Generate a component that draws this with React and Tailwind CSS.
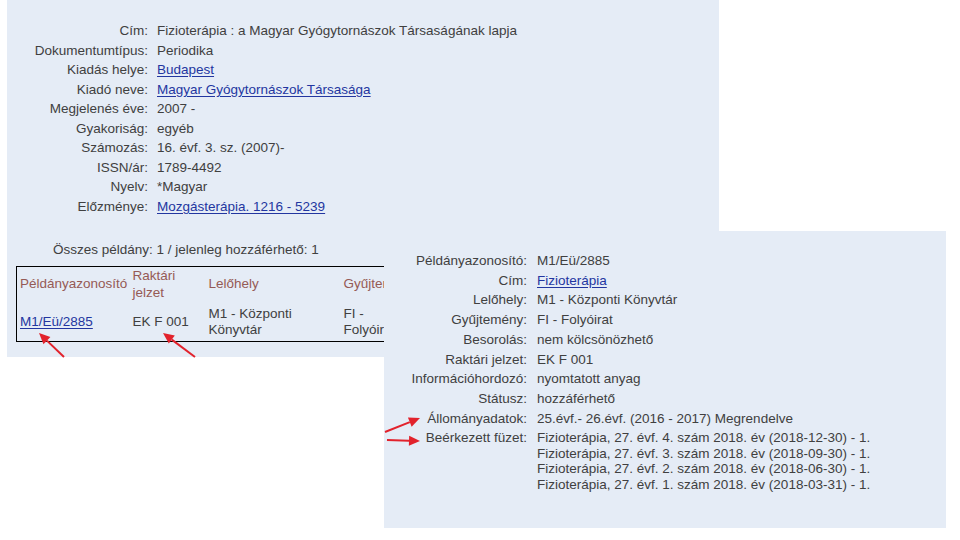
import React from 'react'

// ─── data ────────────────────────────────────────────────────────────────────

const recordRows = [
  { label: 'Cím:', value: 'Fizioterápia : a Magyar Gyógytornászok Társaságának lapja' },
  { label: 'Dokumentumtípus:', value: 'Periodika' },
  { label: 'Kiadás helye:', value: 'Budapest', link: true },
  { label: 'Kiadó neve:', value: 'Magyar Gyógytornászok Társasága', link: true },
  { label: 'Megjelenés éve:', value: '2007 -' },
  { label: 'Gyakoriság:', value: 'egyéb' },
  { label: 'Számozás:', value: '16. évf. 3. sz. (2007)-' },
  { label: 'ISSN/ár:', value: '1789-4492' },
  { label: 'Nyelv:', value: '*Magyar' },
  { label: 'Előzménye:', value: 'Mozgásterápia. 1216 - 5239', link: true },
]

const copyRows = [
  { label: 'Példányazonosító:', value: 'M1/Eü/2885' },
  { label: 'Cím:', value: 'Fizioterápia', link: true },
  { label: 'Lelőhely:', value: 'M1 - Központi Könyvtár' },
  { label: 'Gyűjtemény:', value: 'FI - Folyóirat' },
  { label: 'Besorolás:', value: 'nem kölcsönözhető' },
  { label: 'Raktári jelzet:', value: 'EK F 001' },
  { label: 'Információhordozó:', value: 'nyomtatott anyag' },
  { label: 'Státusz:', value: 'hozzáférhető' },
  { label: 'Állományadatok:', value: '25.évf.- 26.évf. (2016 - 2017) Megrendelve' },
]

const issues = [
  'Fizioterápia, 27. évf. 4. szám 2018. év (2018-12-30) - 1.',
  'Fizioterápia, 27. évf. 3. szám 2018. év (2018-09-30) - 1.',
  'Fizioterápia, 27. évf. 2. szám 2018. év (2018-06-30) - 1.',
  'Fizioterápia, 27. évf. 1. szám 2018. év (2018-03-31) - 1.',
]

const font = { fontFamily: '"Liberation Sans", Arial, sans-serif' }
const linkCls = 'text-[#2336a0] underline underline-offset-2'

function Value({ row }) {
  return row.link ? <span className={linkCls}>{row.value}</span> : row.value
}

// ─── Arrow ───────────────────────────────────────────────────────────────────

function Arrow({ x1, y1, x2, y2 }) {
  const a = Math.atan2(y2 - y1, x2 - x1)
  const len = 11
  const w = 5
  const bx = x2 - Math.cos(a) * len
  const by = y2 - Math.sin(a) * len
  const px = -Math.sin(a) * w
  const py = Math.cos(a) * w
  return (
    <g>
      <line x1={x1} y1={y1} x2={bx} y2={by} stroke="#e2222c" strokeWidth="2" />
      <polygon points={`${x2},${y2} ${bx + px},${by + py} ${bx - px},${by - py}`} fill="#e2222c" />
    </g>
  )
}

export default function App() {
  return (
    <div className="relative w-[960px] h-[540px] bg-white overflow-hidden text-[13.5px] text-[#404040]" style={font}>
      {/* record window */}
      <div className="absolute left-[7px] top-0 w-[712px] h-[357px] bg-[#e5ecf6] pt-[21px]">
        <div className="grid grid-cols-[141px_1fr] leading-[19.55px]">
          {recordRows.map((r) => (
            <React.Fragment key={r.label}>
              <div className="text-right whitespace-nowrap">{r.label}</div>
              <div className="pl-[9px] whitespace-nowrap"><Value row={r} /></div>
            </React.Fragment>
          ))}
        </div>

        <div className="mt-[24px] pl-[46px] leading-[19.5px]">Összes példány: 1 / jelenleg hozzáférhető: 1</div>

        <table className="mt-[6px] ml-[9px] table-fixed border-collapse border border-black w-[560px]">
          <colgroup>
            <col className="w-[113px]" />
            <col className="w-[76px]" />
            <col className="w-[135px]" />
            <col className="w-[236px]" />
          </colgroup>
          <thead>
            <tr className="text-[#955a55] leading-[17px] align-middle">
              <th className="font-normal text-left pl-[3px] pt-0 pb-[2px] whitespace-nowrap">Példányazonosító</th>
              <th className="font-normal text-left pl-[3px] pt-0 pb-[2px]">Raktári<br />jelzet</th>
              <th className="font-normal text-left pl-[3px] pt-0 pb-[2px]">Lelőhely</th>
              <th className="font-normal text-left pl-[3px] pt-0 pb-[2px]">Gyűjtemény</th>
            </tr>
          </thead>
          <tbody>
            <tr className="leading-[16px] align-middle">
              <td className="pl-[3px] py-[3px]"><span className={linkCls}>M1/Eü/2885</span></td>
              <td className="pl-[3px] py-[3px]">EK F 001</td>
              <td className="pl-[3px] py-[3px]">M1 - Központi<br />Könyvtár</td>
              <td className="pl-[3px] py-[3px]">FI -<br />Folyóirat</td>
            </tr>
          </tbody>
        </table>
      </div>

      {/* copy details window */}
      <div className="absolute left-[384px] top-[231px] w-[562px] h-[297px] bg-[#e5ecf6] pt-[20px]">
        <div className="grid grid-cols-[143px_1fr] leading-[19.7px]">
          {copyRows.map((r) => (
            <React.Fragment key={r.label}>
              <div className="text-right whitespace-nowrap">{r.label}</div>
              <div className="pl-[10px] whitespace-nowrap"><Value row={r} /></div>
            </React.Fragment>
          ))}
          <div className="text-right whitespace-nowrap">Beérkezett füzet:</div>
          <div className="pl-[10px] pt-[2px] leading-[15.5px] whitespace-nowrap">
            {issues.map((t) => (
              <div key={t}>{t}</div>
            ))}
          </div>
        </div>
      </div>

      {/* annotation arrows */}
      <svg className="absolute inset-0 pointer-events-none" width="960" height="540" viewBox="0 0 960 540">
        <Arrow x1={64} y1={357} x2={39} y2={333} />
        <Arrow x1={195} y1={357} x2={163} y2={333} />
        <Arrow x1={385} y1={432} x2={420} y2={418} />
        <Arrow x1={387} y1={440} x2={420} y2={441} />
      </svg>
    </div>
  )
}
